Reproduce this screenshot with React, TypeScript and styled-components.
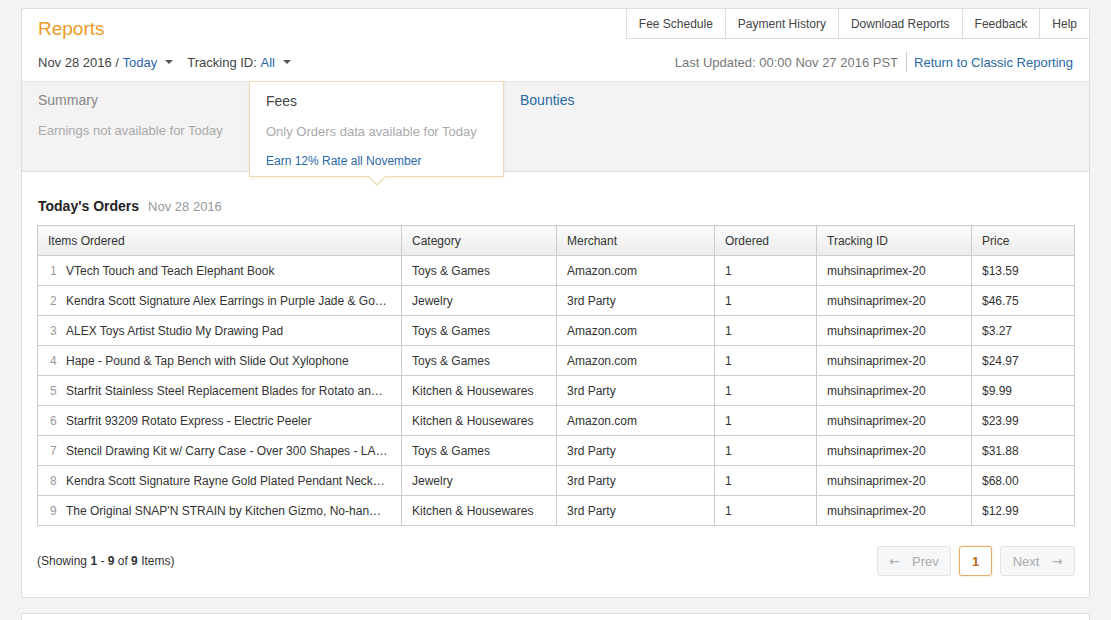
import React from "react";
import styled, { createGlobalStyle } from "styled-components";

const GlobalStyle = createGlobalStyle`
  body {
    margin: 0;
    background: #f3f3f3;
    font-family: "Liberation Sans", Arial, sans-serif;
    font-size: 13px;
    color: #333;
  }
`;

const orders = [
  ["VTech Touch and Teach Elephant Book", "Toys & Games", "Amazon.com", "$13.59"],
  ["Kendra Scott Signature Alex Earrings in Purple Jade & Go…", "Jewelry", "3rd Party", "$46.75"],
  ["ALEX Toys Artist Studio My Drawing Pad", "Toys & Games", "Amazon.com", "$3.27"],
  ["Hape - Pound & Tap Bench with Slide Out Xylophone", "Toys & Games", "Amazon.com", "$24.97"],
  ["Starfrit Stainless Steel Replacement Blades for Rotato an…", "Kitchen & Housewares", "3rd Party", "$9.99"],
  ["Starfrit 93209 Rotato Express - Electric Peeler", "Kitchen & Housewares", "Amazon.com", "$23.99"],
  ["Stencil Drawing Kit w/ Carry Case - Over 300 Shapes - LA…", "Toys & Games", "3rd Party", "$31.88"],
  ["Kendra Scott Signature Rayne Gold Plated Pendant Neck…", "Jewelry", "3rd Party", "$68.00"],
  ["The Original SNAP'N STRAIN by Kitchen Gizmo, No-han…", "Kitchen & Housewares", "3rd Party", "$12.99"],
];

const navLinks = ["Fee Schedule", "Payment History", "Download Reports", "Feedback", "Help"];

export default function App() {
  return (
    <>
      <GlobalStyle />
      <Page>
        <Card>
          <HeaderTop>
            <Title>Reports</Title>
            <TopNav>
              {navLinks.map((l) => (
                <NavLink key={l}>{l}</NavLink>
              ))}
            </TopNav>
          </HeaderTop>
          <FilterRow>
            <Filters>
              <Filter>
                Nov 28 2016 / <Link>Today</Link>
                <Caret />
              </Filter>
              <Filter>
                Tracking ID: <Link>All</Link>
                <Caret />
              </Filter>
            </Filters>
            <Updated>
              Last Updated: 00:00 Nov 27 2016 PST
              <Divider />
              <Link>Return to Classic Reporting</Link>
            </Updated>
          </FilterRow>

          <Band>
            <Tile $width={227}>
              <TileTitle>Summary</TileTitle>
              <TileNote>Earnings not available for Today</TileNote>
            </Tile>
            <Tile $width={255} $active>
              <TileTitle $active>Fees</TileTitle>
              <TileNote>Only Orders data available for Today</TileNote>
              <TileLink>Earn 12% Rate all November</TileLink>
            </Tile>
            <Tile>
              <TileTitle $link>Bounties</TileTitle>
            </Tile>
          </Band>

          <Body>
            <SectionHead>
              Today's Orders<SectionDate>Nov 28 2016</SectionDate>
            </SectionHead>
            <Table>
              <colgroup>
                <col style={{ width: 364 }} />
                <col style={{ width: 155 }} />
                <col style={{ width: 158 }} />
                <col style={{ width: 102 }} />
                <col style={{ width: 155 }} />
                <col />
              </colgroup>
              <thead>
                <tr>
                  <Th>Items Ordered</Th>
                  <Th>Category</Th>
                  <Th>Merchant</Th>
                  <Th>Ordered</Th>
                  <Th>Tracking ID</Th>
                  <Th>Price</Th>
                </tr>
              </thead>
              <tbody>
                {orders.map((o, i) => (
                  <tr key={i}>
                    <Td>
                      <RowNum>{i + 1}</RowNum>
                      {o[0]}
                    </Td>
                    <Td>{o[1]}</Td>
                    <Td>{o[2]}</Td>
                    <Td>1</Td>
                    <Td>muhsinaprimex-20</Td>
                    <Td>{o[3]}</Td>
                  </tr>
                ))}
              </tbody>
            </Table>
            <Footer>
              <Showing>
                (Showing <b>1</b> - <b>9</b> of <b>9</b> Items)
              </Showing>
              <Pager>
                <PageButton $width={74}>
                  <Arrow>←</Arrow>Prev
                </PageButton>
                <PageButton $width={33} $current>
                  1
                </PageButton>
                <PageButton $width={75}>
                  Next<Arrow $right>→</Arrow>
                </PageButton>
              </Pager>
            </Footer>
          </Body>
        </Card>
        <NextCard />
      </Page>
    </>
  );
}

const Page = styled.div`
  padding: 8px 21px 0;
`;

const Card = styled.div`
  background: #fff;
  border: 1px solid #ddd;
  border-radius: 2px;
`;

const NextCard = styled(Card)`
  margin-top: 15px;
  height: 40px;
`;

const HeaderTop = styled.div`
  display: flex;
  justify-content: space-between;
  align-items: flex-start;
`;

const Title = styled.h1`
  margin: 0;
  padding: 8px 16px 0;
  font-size: 19px;
  line-height: 24px;
  font-weight: normal;
  color: #eb9a2a;
`;

const TopNav = styled.nav`
  display: flex;
`;

const NavLink = styled.a`
  display: flex;
  align-items: center;
  height: 29px;
  padding: 0 12px;
  border-left: 1px solid #ddd;
  border-bottom: 1px solid #ddd;
  font-size: 12px;
  color: #444;
  cursor: pointer;
`;

const FilterRow = styled.div`
  display: flex;
  justify-content: space-between;
  align-items: center;
  height: 18px;
  margin: 12px 0 10px;
  padding: 0 16px;
`;

const Filters = styled.div`
  display: flex;
  gap: 14px;
`;

const Filter = styled.div`
  display: flex;
  align-items: center;
  white-space: pre;
  color: #444;
`;

const Link = styled.a`
  color: #2a68a8;
  cursor: pointer;
`;

const Caret = styled.span`
  width: 0;
  height: 0;
  margin-left: 8px;
  border-left: 4px solid transparent;
  border-right: 4px solid transparent;
  border-top: 4px solid #555;
`;

const Updated = styled.div`
  display: flex;
  align-items: center;
  color: #777;
`;

const Divider = styled.span`
  width: 1px;
  height: 20px;
  margin: 0 7px 0 8px;
  background: #ccc;
`;

const Band = styled.div`
  display: flex;
  height: 89px;
  background: #f3f3f3;
  border-top: 1px solid #e6e6e6;
  border-bottom: 1px solid #ddd;
`;

const Tile = styled.div<{ $width?: number; $active?: boolean }>`
  position: relative;
  flex: ${(p) => (p.$width ? `0 0 ${p.$width}px` : "1")};
  padding: 8px 16px 0;
  box-sizing: border-box;
  ${(p) =>
    p.$active &&
    `
    height: 96px;
    margin-top: -1px;
    padding-top: 9px;
    background: #fff;
    border: 1px solid #eedcb8;
    box-shadow: 0 1px 3px rgba(200, 170, 110, 0.2);
    z-index: 2;
    &::before, &::after {
      content: "";
      position: absolute;
      left: 50%;
      width: 0;
      height: 0;
      border-left: 9px solid transparent;
      border-right: 9px solid transparent;
    }
    &::before {
      bottom: -10px;
      margin-left: -9px;
      border-top: 9px solid #eedcb8;
    }
    &::after {
      bottom: -8px;
      margin-left: -8px;
      border-left-width: 8px;
      border-right-width: 8px;
      border-top: 8px solid #fff;
    }
  `}
`;

const TileTitle = styled.div<{ $active?: boolean; $link?: boolean }>`
  font-size: 14px;
  line-height: 20px;
  color: ${(p) => (p.$link ? "#2a68a8" : p.$active ? "#444" : "#888")};
`;

const TileNote = styled.div`
  margin-top: 11px;
  line-height: 20px;
  color: #aaa;
  white-space: nowrap;
`;

const TileLink = styled.a`
  display: block;
  margin-top: 11px;
  font-size: 12px;
  line-height: 16px;
  color: #2a68a8;
`;

const Body = styled.div`
  padding: 25px 14px 21px 15px;
`;

const SectionHead = styled.div`
  padding-left: 1px;
  margin-bottom: 9px;
  font-size: 14px;
  line-height: 18px;
  font-weight: bold;
  color: #222;
`;

const SectionDate = styled.span`
  margin-left: 9px;
  font-size: 13px;
  font-weight: normal;
  color: #999;
`;

const Table = styled.table`
  width: 100%;
  table-layout: fixed;
  border-collapse: collapse;
  border: 1px solid #ccc;
  font-size: 12px;
`;

const Th = styled.th`
  height: 29px;
  padding: 0 10px;
  text-align: left;
  font-weight: normal;
  color: #333;
  background: linear-gradient(#fbfbfb, #ececec);
  border: 1px solid #ccc;
`;

const Td = styled.td`
  height: 29px;
  padding: 0 10px;
  border: 1px solid #ccc;
  color: #333;
  white-space: nowrap;
  overflow: hidden;
  text-overflow: ellipsis;
`;

const RowNum = styled.span`
  display: inline-block;
  width: 16px;
  margin-left: 2px;
  color: #999;
`;

const Footer = styled.div`
  display: flex;
  justify-content: space-between;
  align-items: center;
  margin-top: 20px;
`;

const Showing = styled.div`
  font-size: 12px;
  color: #333;
`;

const Pager = styled.div`
  display: flex;
  gap: 8px;
`;

const PageButton = styled.button<{ $width: number; $current?: boolean }>`
  display: flex;
  align-items: center;
  justify-content: center;
  width: ${(p) => p.$width}px;
  height: 30px;
  padding: 0;
  font-family: inherit;
  font-size: 13px;
  border-radius: 3px;
  border: 1px solid ${(p) => (p.$current ? "#e3ae6a" : "#e2e4e8")};
  background: ${(p) => (p.$current ? "#fff" : "#f6f7f9")};
  color: ${(p) => (p.$current ? "#b86a17" : "#aaa")};
  font-weight: ${(p) => (p.$current ? "bold" : "normal")};
  ${(p) => p.$current && "box-shadow: 0 0 2px rgba(228, 160, 70, 0.5);"}
`;

const Arrow = styled.span<{ $right?: boolean }>`
  font-family: "DejaVu Sans", sans-serif;
  font-size: 13px;
  ${(p) => (p.$right ? "margin-left: 12px;" : "margin-right: 12px;")}
`;
